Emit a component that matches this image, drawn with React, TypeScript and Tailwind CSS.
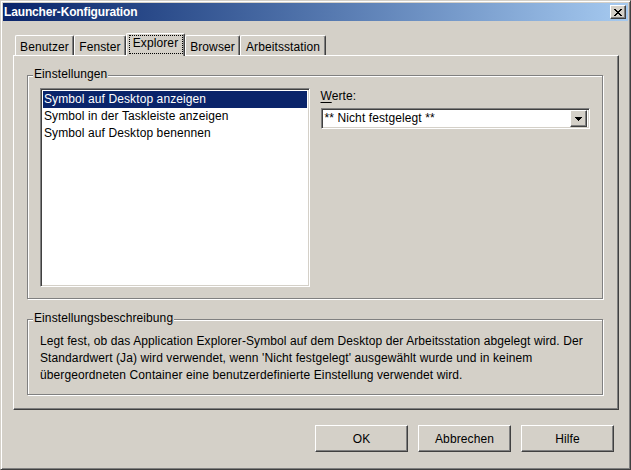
import React from "react";

const tabs = [
  { label: "Benutzer", w: "w-[59px]" },
  { label: "Fenster", w: "w-[52px]" },
  { label: "Explorer", w: "w-[59px]", active: true },
  { label: "Browser", w: "w-[55px]" },
  { label: "Arbeitsstation", w: "w-[86px]" },
];

const settings = [
  "Symbol auf Desktop anzeigen",
  "Symbol in der Taskleiste anzeigen",
  "Symbol auf Desktop benennen",
];

const raised =
  "border border-t-white border-l-white border-r-[#404040] border-b-[#404040] shadow-[inset_-1px_-1px_0_#808080]";
const sunken =
  "border border-t-[#808080] border-l-[#808080] border-r-white border-b-white shadow-[inset_1px_1px_0_#404040,inset_-1px_-1px_0_#d4d0c8]";
const etched = "border border-[#808080] shadow-[1px_1px_0_#fff,inset_1px_1px_0_#fff]";

function GroupBox({ title, className, children }: { title: string; className?: string; children?: React.ReactNode }) {
  return (
    <div className={`relative ${etched} ${className ?? ""}`}>
      <span className="absolute left-[5px] top-[-9px] px-[1px] bg-[#d4d0c8] leading-[14px]">{title}</span>
      {children}
    </div>
  );
}

function WinButton({ children }: { children: React.ReactNode }) {
  return (
    <button className={`w-[93px] h-[27px] bg-[#d4d0c8] ${raised} text-[12px] tracking-[0.1px] text-black`}>
      {children}
    </button>
  );
}

export default function App() {
  return (
    <div className="w-[631px] h-[470px] bg-[#d4d0c8] font-['Liberation_Sans',Arial,sans-serif] text-[12px] tracking-[0.1px] text-black border border-t-[#d4d0c8] border-l-[#d4d0c8] border-r-[#404040] border-b-[#404040] shadow-[inset_1px_1px_0_#fff,inset_-1px_-1px_0_#808080] p-[2px] flex flex-col">
      {/* title bar */}
      <div className="h-[18px] flex items-center justify-between bg-gradient-to-r from-[#0a246a] to-[#a6caf0] pl-[1px] pr-[2px]">
        <span className="text-white font-bold text-[12px] leading-[14px] tracking-[-0.15px]">Launcher-Konfiguration</span>
        <div className={`w-[16px] h-[14px] bg-[#d4d0c8] ${raised} flex items-center justify-center`}>
          <svg width="8" height="7" viewBox="0 0 8 7" shapeRendering="crispEdges">
            <path d="M0 0h2v1h-2zM6 0h2v1h-2zM1 1h2v1h-2zM5 1h2v1h-2zM2 2h4v1h-4zM3 3h2v1h-2zM2 4h4v1h-4zM1 5h2v1h-2zM5 5h2v1h-2zM0 6h2v1h-2zM6 6h2v1h-2z" fill="#000" />
          </svg>
        </div>
      </div>

      {/* tabs */}
      <div className="mt-[12px] ml-[12px] h-[22px] flex items-end relative z-10">
        {tabs.map((t) =>
          t.active ? (
            <div
              key={t.label}
              className={`${t.w} h-[23px] -mb-px bg-[#d4d0c8] border-l border-t border-l-white border-t-white border-r border-r-[#404040] shadow-[inset_-1px_0_0_#808080] rounded-t-[2px] flex justify-center pt-[1px]`}
            >
              <span className="border border-dotted border-black h-[19px] leading-[15px] w-[54px] text-center">{t.label}</span>
            </div>
          ) : (
            <div
              key={t.label}
              className={`${t.w} h-[20px] border-l border-t border-l-white border-t-white border-r border-r-[#404040] shadow-[inset_-1px_0_0_#808080] rounded-t-[2px] text-center leading-[14px] pt-[4px]`}
            >
              {t.label}
            </div>
          )
        )}
      </div>

      {/* panel */}
      <div className="ml-[10px] w-[606px] h-[355px] border border-t-white border-l-white border-r-[#404040] border-b-[#404040] shadow-[inset_-1px_-1px_0_#808080] pl-[13px] pt-[19px]">
        <GroupBox title="Einstellungen" className="w-[576px] h-[224px] p-[12px] flex gap-[11px]">
          <div className={`w-[270px] h-[199px] bg-white ${sunken} p-[2px]`}>
            {settings.map((s, i) => (
              <div
                key={s}
                className={`h-[17px] leading-[17px] pl-[1px] ${i === 0 ? "bg-[#0a246a] text-white" : ""}`}
              >
                {s}
              </div>
            ))}
          </div>
          <div className="w-[270px] flex flex-col">
            <div className="h-[20px] leading-[14px] pt-[1px]">
              <span className="underline underline-offset-[2px]">W</span>erte:
            </div>
            <div className={`h-[21px] bg-white ${sunken} p-[2px] flex items-center`}>
              <span className="flex-1 pl-[1px] leading-[15px]">** Nicht festgelegt **</span>
              <div className={`w-[17px] h-[17px] bg-[#d4d0c8] ${raised} flex items-center justify-center`}>
                <svg width="7" height="4" viewBox="0 0 7 4" shapeRendering="crispEdges">
                  <path d="M0 0h7v1h-7zM1 1h5v1h-5zM2 2h3v1h-3zM3 3h1v1h-1z" fill="#000" />
                </svg>
              </div>
            </div>
          </div>
        </GroupBox>

        <GroupBox title="Einstellungsbeschreibung" className="mt-[20px] w-[576px] h-[76px] pl-[12px] pt-[13px]">
          <p className="leading-[17px] w-[560px]">
            Legt fest, ob das Application Explorer-Symbol auf dem Desktop der Arbeitsstation abgelegt wird. Der
            <br />
            Standardwert (Ja) wird verwendet, wenn 'Nicht festgelegt' ausgewählt wurde und in keinem
            <br />
            übergeordneten Container eine benutzerdefinierte Einstellung verwendet wird.
          </p>
        </GroupBox>
      </div>

      {/* buttons */}
      <div className="mt-[15px] flex justify-end gap-[10px] pr-[14px]">
        <WinButton>OK</WinButton>
        <WinButton>Abbrechen</WinButton>
        <WinButton>Hilfe</WinButton>
      </div>
    </div>
  );
}
